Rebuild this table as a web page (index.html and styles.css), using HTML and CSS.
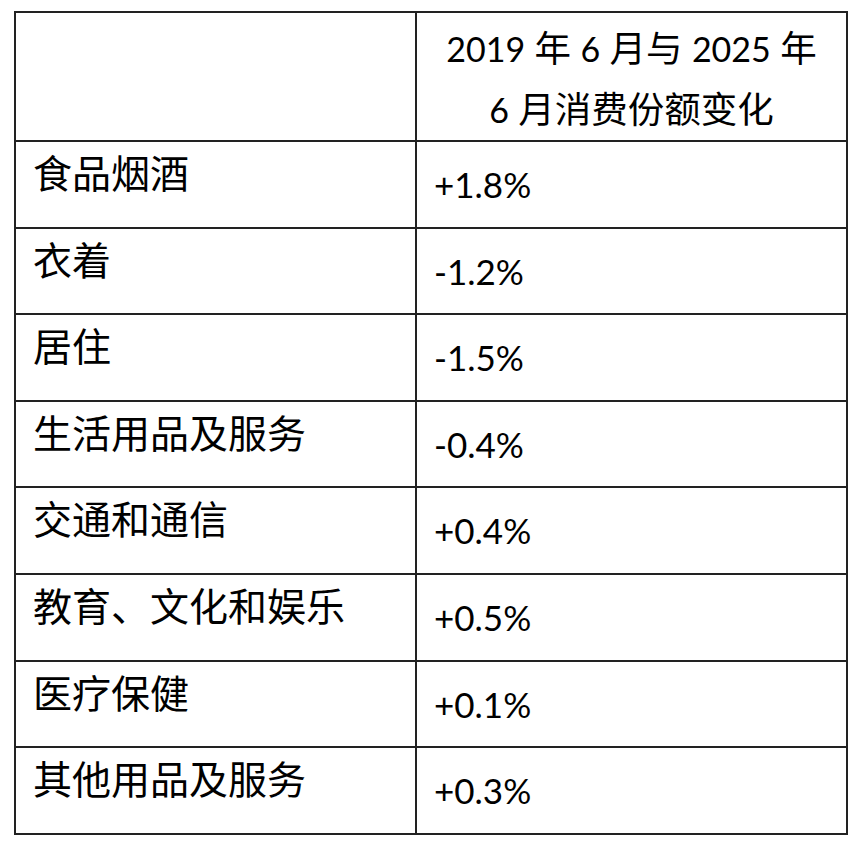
FILE: index.html
```html
<!DOCTYPE html>
<html lang="zh-CN">
<head>
<meta charset="utf-8">
<title>消费份额变化</title>
<link rel="stylesheet" href="styles.css">
</head>
<body>
<table class="share">
  <colgroup>
    <col class="col-cat">
    <col class="col-val">
  </colgroup>
  <thead>
    <tr class="head-row">
      <th class="cat"></th>
      <th class="head"><span class="num">2019</span> 年 <span class="num">6</span> 月与 <span class="num">2025</span> 年<br><span class="num">6</span> 月消费份额变化</th>
    </tr>
  </thead>
  <tbody>
    <tr><td class="cat">食品烟酒</td><td class="val">+1.8%</td></tr>
    <tr><td class="cat">衣着</td><td class="val">-1.2%</td></tr>
    <tr><td class="cat">居住</td><td class="val">-1.5%</td></tr>
    <tr><td class="cat">生活用品及服务</td><td class="val">-0.4%</td></tr>
    <tr><td class="cat">交通和通信</td><td class="val">+0.4%</td></tr>
    <tr><td class="cat">教育、文化和娱乐</td><td class="val">+0.5%</td></tr>
    <tr><td class="cat">医疗保健</td><td class="val">+0.1%</td></tr>
    <tr><td class="cat">其他用品及服务</td><td class="val">+0.3%</td></tr>
  </tbody>
</table>
</body>
</html>
```
FILE: styles.css
```css
html, body {
  margin: 0;
  padding: 0;
  background: #ffffff;
}
body {
  padding: 11px 0 0 14px;
  font-family: Lato, "Noto Sans CJK SC", sans-serif;
  color: #000;
}
.share {
  border-collapse: collapse;
  table-layout: fixed;
  width: 832px;
}
.col-cat {
  width: 401px;
}
.col-val {
  width: 431px;
}
.share th, .share td {
  border: 2px solid #222;
  padding: 0;
  font-weight: normal;
  vertical-align: top;
  text-align: left;
}
.share .cat {
  font-size: 39px;
  padding: 6px 0 0 17px;
  line-height: 50px;
}
.share .val {
  font-size: 35px;
  padding: 17px 0 0 17px;
  line-height: 50px;
}
.head-row {
  height: 129px;
}
.share .head {
  font-size: 36.5px;
  text-align: center;
  padding: 5px 0 0 0;
  line-height: 61px;
}
.num {
  font-size: 34px;
}
tbody tr {
  height: 86.6px;
}
```
